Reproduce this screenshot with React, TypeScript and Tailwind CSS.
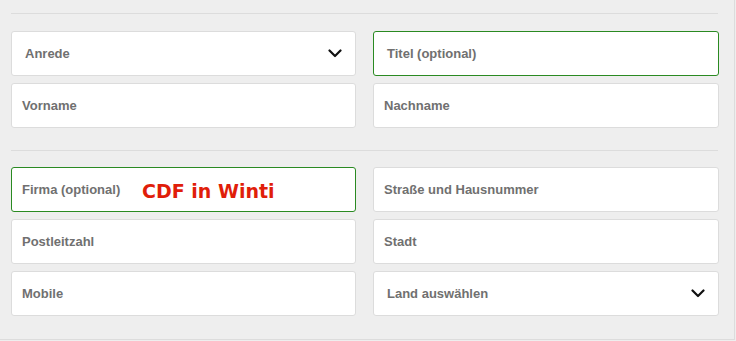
import React from 'react';

type Field = {
  label: string;
  select?: boolean;
  active?: boolean;
  wide?: boolean;
  note?: string;
};

const sections: Field[][] = [
  [
    { label: 'Anrede', select: true, wide: true },
    { label: 'Titel (optional)', active: true, wide: true },
    { label: 'Vorname' },
    { label: 'Nachname' },
  ],
  [
    { label: 'Firma (optional)', active: true, note: 'CDF in Winti' },
    { label: 'Straße und Hausnummer' },
    { label: 'Postleitzahl' },
    { label: 'Stadt' },
    { label: 'Mobile' },
    { label: 'Land auswählen', select: true, wide: true },
  ],
];

const Chevron = () => (
  <svg width="14" height="9" viewBox="0 0 14 9" className="shrink-0">
    <path d="M1.5 1.5 L7 7 L12.5 1.5" fill="none" stroke="#111" strokeWidth="2.2" strokeLinecap="round" strokeLinejoin="round" />
  </svg>
);

const Input = ({ field }: { field: Field }) => (
  <div
    className={
      field.active
        ? 'relative flex h-[45px] items-center justify-between rounded-[3px] border border-[#2a8a22] bg-white pr-[13px]'
        : 'relative flex h-[45px] items-center justify-between rounded-[3px] border border-[#dcdcdc] bg-white pr-[13px]'
    }
  >
    <span className={field.wide ? 'pl-[13px] text-[13px] font-bold text-[#707070]' : 'pl-[10px] text-[13px] font-bold text-[#707070]'}>
      {field.label}
    </span>
    {field.select && <Chevron />}
    {field.note && (
      <span
        className="absolute left-[130px] top-[9px] text-[19px] font-bold text-[#e01e0a]"
        style={{ fontFamily: '"DejaVu Sans", Verdana, sans-serif' }}
      >
        {field.note}
      </span>
    )}
  </div>
);

export default function App() {
  return (
    <div className="min-h-screen bg-[#eeeeee]" style={{ fontFamily: '"Liberation Sans", Arial, sans-serif' }}>
      <div className="h-[340px] w-[735px] border-b border-r border-[#dcdcdc] pl-[11px] pr-[16px] pt-[13px]">
        {sections.map((fields, i) => (
          <div
            key={i}
            className={i === 0 ? 'border-t border-[#dcdcdc] pb-[22px] pt-[17px]' : 'border-t border-[#dcdcdc] pb-[22px] pt-[16px]'}
          >
            <div className="grid grid-cols-[345px_346px] gap-x-[17px] gap-y-[7px]">
              {fields.map((f) => (
                <Input key={f.label} field={f} />
              ))}
            </div>
          </div>
        ))}
      </div>
    </div>
  );
}
